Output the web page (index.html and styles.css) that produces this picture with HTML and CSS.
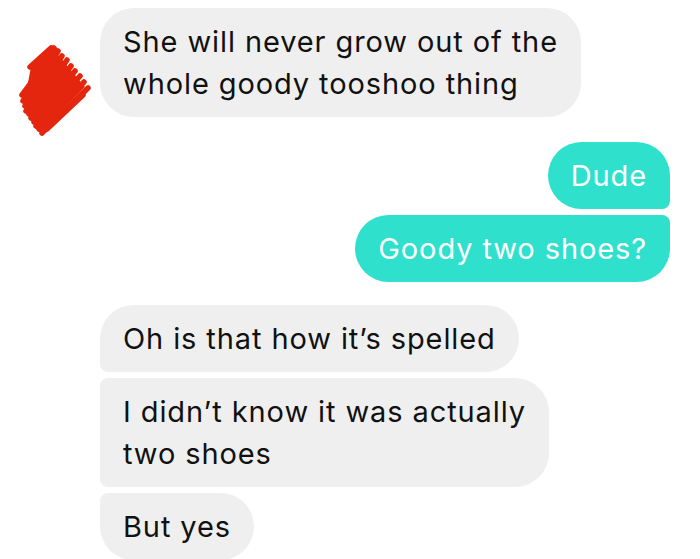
FILE: index.html
```html
<!DOCTYPE html>
<html lang="en">

<head>
  <meta charset="UTF-8">
  <meta name="viewport" content="width=device-width, initial-scale=1.0">
  <title>Messages</title>
  <link rel="stylesheet" href="styles.css">
</head>

<body>
  <div id="thread">
    <div class="group group-in first-group">
      <div class="avatar">
        <svg width="80" height="92" viewBox="0 0 80 92">
          <polygon class="scribble-core" points="40,4 72,42 29,86 11,58 18,22" />
          <path class="scribble"
            d="M17 22 L38 3 M10 56 L41 3 M12 61 L45 6 M13 66 L49 11 M16 69 L54 15 M18 73 L58 21 M21 77 L62 26 M23 81 L67 31 M26 84 L71 37 M29 88 L75 43 M34 84 L70 50 M9 50 L24 30" />
        </svg>
      </div>
      <div class="bubble in solo">She will never grow out of the<br>whole goody tooshoo thing</div>
    </div>

    <div class="group group-out">
      <div class="bubble out top">Dude</div>
      <div class="bubble out bottom">Goody two shoes?</div>
    </div>

    <div class="group group-in">
      <div class="bubble in top">Oh is that how it’s spelled</div>
      <div class="bubble in middle">I didn’t know it was actually<br>two shoes</div>
      <div class="bubble in bottom">But yes</div>
    </div>
  </div>
</body>

</html>
```

FILE: styles.css
```css
body,
html {
  margin: 0;
  padding: 0;
  background-color: #ffffff;
  font-family: Inter, "Liberation Sans", Arial, sans-serif;
  overflow: hidden;
}

#thread {
  padding: 8px 30px 0 0;
  display: flex;
  flex-direction: column;
}

.group {
  display: flex;
  flex-direction: column;
  gap: 6px;
}

.group-in {
  align-items: flex-start;
  padding-left: 100px;
}

.group-out {
  align-items: flex-end;
  margin-top: 5px;
  margin-bottom: 23px;
}

.first-group {
  flex-direction: row;
  padding-left: 0;
  gap: 0;
}

.avatar {
  width: 100px;
  flex: none;
  padding-top: 37px;
}

.avatar svg {
  display: block;
  margin-left: 13px;
}

.scribble-core {
  fill: #e5260e;
}

.scribble {
  fill: none;
  stroke: #e5260e;
  stroke-width: 5.5;
  stroke-linecap: round;
}

.bubble {
  padding: 13px 23px 12px 23px;
  font-size: 29px;
  line-height: 42px;
  color: #111111;
  border-radius: 34px;
  letter-spacing: 0.9px;
}

.in {
  background-color: #efefef;
}

.out {
  background-color: #2fe0cd;
  color: #ffffff;
}

.group-in .top {
  border-bottom-left-radius: 8px;
}

.group-in .middle {
  border-top-left-radius: 8px;
  border-bottom-left-radius: 8px;
}

.group-in .bottom {
  border-top-left-radius: 8px;
}

.group-out .top {
  border-bottom-right-radius: 8px;
}

.group-out .bottom {
  border-top-right-radius: 8px;
}
```
